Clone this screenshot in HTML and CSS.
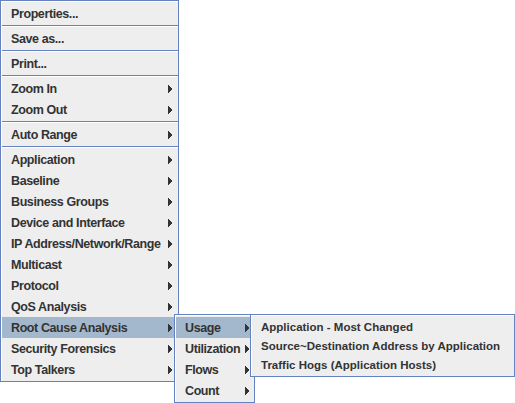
FILE: index.html
```html
<!DOCTYPE html>
<html>
<head>
<meta charset="utf-8">
<link rel="stylesheet" href="styles.css">
</head>
<body>
<div class="stage">
  <ul class="menu main">
    <li class="item">Properties...</li>
    <li class="sep"></li>
    <li class="item">Save as...</li>
    <li class="sep"></li>
    <li class="item">Print...</li>
    <li class="sep"></li>
    <li class="item">Zoom In<svg class="arrow" width="4" height="8" viewBox="0 0 4 8"><path d="M0 0h1v8H0zM1 1h1v6H1zM2 2h1v4H2zM3 3h1v2H3z"/></svg></li>
    <li class="item">Zoom Out<svg class="arrow" width="4" height="8" viewBox="0 0 4 8"><path d="M0 0h1v8H0zM1 1h1v6H1zM2 2h1v4H2zM3 3h1v2H3z"/></svg></li>
    <li class="sep"></li>
    <li class="item">Auto Range<svg class="arrow" width="4" height="8" viewBox="0 0 4 8"><path d="M0 0h1v8H0zM1 1h1v6H1zM2 2h1v4H2zM3 3h1v2H3z"/></svg></li>
    <li class="sep"></li>
    <li class="item">Application<svg class="arrow" width="4" height="8" viewBox="0 0 4 8"><path d="M0 0h1v8H0zM1 1h1v6H1zM2 2h1v4H2zM3 3h1v2H3z"/></svg></li>
    <li class="item">Baseline<svg class="arrow" width="4" height="8" viewBox="0 0 4 8"><path d="M0 0h1v8H0zM1 1h1v6H1zM2 2h1v4H2zM3 3h1v2H3z"/></svg></li>
    <li class="item">Business Groups<svg class="arrow" width="4" height="8" viewBox="0 0 4 8"><path d="M0 0h1v8H0zM1 1h1v6H1zM2 2h1v4H2zM3 3h1v2H3z"/></svg></li>
    <li class="item">Device and Interface<svg class="arrow" width="4" height="8" viewBox="0 0 4 8"><path d="M0 0h1v8H0zM1 1h1v6H1zM2 2h1v4H2zM3 3h1v2H3z"/></svg></li>
    <li class="item">IP Address/Network/Range<svg class="arrow" width="4" height="8" viewBox="0 0 4 8"><path d="M0 0h1v8H0zM1 1h1v6H1zM2 2h1v4H2zM3 3h1v2H3z"/></svg></li>
    <li class="item">Multicast<svg class="arrow" width="4" height="8" viewBox="0 0 4 8"><path d="M0 0h1v8H0zM1 1h1v6H1zM2 2h1v4H2zM3 3h1v2H3z"/></svg></li>
    <li class="item">Protocol<svg class="arrow" width="4" height="8" viewBox="0 0 4 8"><path d="M0 0h1v8H0zM1 1h1v6H1zM2 2h1v4H2zM3 3h1v2H3z"/></svg></li>
    <li class="item">QoS Analysis<svg class="arrow" width="4" height="8" viewBox="0 0 4 8"><path d="M0 0h1v8H0zM1 1h1v6H1zM2 2h1v4H2zM3 3h1v2H3z"/></svg></li>
    <li class="item selected">Root Cause Analysis<svg class="arrow" width="4" height="8" viewBox="0 0 4 8"><path d="M0 0h1v8H0zM1 1h1v6H1zM2 2h1v4H2zM3 3h1v2H3z"/></svg></li>
    <li class="item">Security Forensics<svg class="arrow" width="4" height="8" viewBox="0 0 4 8"><path d="M0 0h1v8H0zM1 1h1v6H1zM2 2h1v4H2zM3 3h1v2H3z"/></svg></li>
    <li class="item">Top Talkers<svg class="arrow" width="4" height="8" viewBox="0 0 4 8"><path d="M0 0h1v8H0zM1 1h1v6H1zM2 2h1v4H2zM3 3h1v2H3z"/></svg></li>
  </ul>

  <ul class="menu sub1">
    <li class="item selected">Usage<svg class="arrow" width="4" height="8" viewBox="0 0 4 8"><path d="M0 0h1v8H0zM1 1h1v6H1zM2 2h1v4H2zM3 3h1v2H3z"/></svg></li>
    <li class="item">Utilization<svg class="arrow" width="4" height="8" viewBox="0 0 4 8"><path d="M0 0h1v8H0zM1 1h1v6H1zM2 2h1v4H2zM3 3h1v2H3z"/></svg></li>
    <li class="item">Flows<svg class="arrow" width="4" height="8" viewBox="0 0 4 8"><path d="M0 0h1v8H0zM1 1h1v6H1zM2 2h1v4H2zM3 3h1v2H3z"/></svg></li>
    <li class="item">Count<svg class="arrow" width="4" height="8" viewBox="0 0 4 8"><path d="M0 0h1v8H0zM1 1h1v6H1zM2 2h1v4H2zM3 3h1v2H3z"/></svg></li>
  </ul>

  <ul class="menu sub2">
    <li class="item leaf">Application - Most Changed</li>
    <li class="item leaf">Source~Destination Address by Application</li>
    <li class="item leaf">Traffic Hogs (Application Hosts)</li>
  </ul>
</div>
</body>
</html>
```

FILE: styles.css
```css
html, body {
  margin: 0;
  padding: 0;
  background: #ffffff;
}

.stage {
  position: relative;
  width: 515px;
  height: 403px;
  overflow: hidden;
}

.menu {
  list-style: none;
  margin: 0;
  padding: 2px 0 1px 1px;
  box-sizing: border-box;
  border: 1px solid #6382bf;
  background: #eeeeee;
  box-shadow: inset 1px 1px 0 #ffffff;
  font-family: "Liberation Sans", Arial, sans-serif;
  font-weight: bold;
  font-size: 12.5px;
  letter-spacing: -0.4px;
  color: #333333;
}

.main {
  width: 179px;
}

.main .item {
  padding-right: 6px;
}

.sub1 {
  position: absolute;
  left: 174px;
  top: 314px;
  width: 81px;
}

.sub2 {
  position: absolute;
  left: 250px;
  top: 314px;
  width: 265px;
  padding-bottom: 2px;
  font-size: 11.5px;
  letter-spacing: 0;
}

.item {
  display: flex;
  align-items: center;
  justify-content: space-between;
  height: 21px;
  line-height: 22px;
  padding: 0 5px 0 9px;
  white-space: nowrap;
}

.item.leaf {
  box-sizing: border-box;
  height: 19px;
  line-height: 17px;
  padding-top: 2px;
}

.item.selected {
  background: #a3b8cc;
}

.arrow {
  display: block;
  flex: none;
  fill: #333333;
  shape-rendering: crispEdges;
}

.sep {
  height: 4px;
  box-sizing: border-box;
  border-top: 1px solid #eeeeee;
  background: linear-gradient(#6382bf 0 1px, #ffffff 1px 2px, transparent 2px);
}
```
